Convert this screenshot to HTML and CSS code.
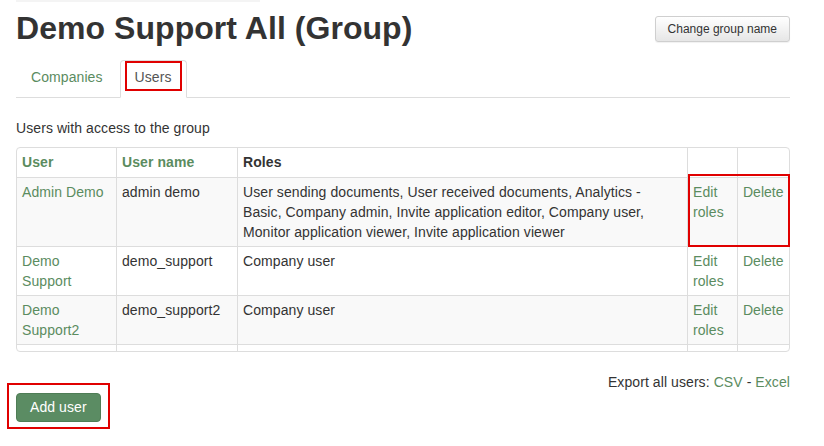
FILE: index.html
```html
<!DOCTYPE html>
<html>
<head>
<meta charset="utf-8">
<link rel="stylesheet" href="styles.css">
</head>
<body>
<div class="page">
  <div class="strip"></div>
  <div class="header">
    <h1 class="title">Demo Support All (Group)</h1>
    <button class="btn-default">Change group name</button>
  </div>
  <ul class="tabs">
    <li class="tab"><a class="tab-link"><span class="tab-label">Companies</span></a></li>
    <li class="tab active"><a class="tab-link"><span class="tab-label marked">Users</span></a></li>
  </ul>
  <p class="intro">Users with access to the group</p>
  <div class="table-area">
    <div class="table-wrap">
      <table class="users">
        <thead>
          <tr>
            <th class="c1"><a class="link">User</a></th>
            <th class="c2"><a class="link">User name</a></th>
            <th class="c3">Roles</th>
            <th class="c4"></th>
            <th class="c5"></th>
          </tr>
        </thead>
        <tbody>
          <tr class="odd">
            <td><a class="link">Admin Demo</a></td>
            <td>admin demo</td>
            <td class="roles">User sending documents, User received documents, Analytics - Basic, Company admin, Invite application editor, Company user, Monitor application viewer, Invite application viewer</td>
            <td><a class="link">Edit roles</a></td>
            <td class="nowrap"><a class="link">Delete</a></td>
          </tr>
          <tr>
            <td><a class="link">Demo Support</a></td>
            <td>demo_support</td>
            <td class="roles">Company user</td>
            <td><a class="link">Edit roles</a></td>
            <td class="nowrap"><a class="link">Delete</a></td>
          </tr>
          <tr class="odd">
            <td><a class="link">Demo Support2</a></td>
            <td>demo_support2</td>
            <td class="roles">Company user</td>
            <td><a class="link">Edit roles</a></td>
            <td class="nowrap"><a class="link">Delete</a></td>
          </tr>
          <tr>
            <td>&nbsp;</td>
            <td>&nbsp;</td>
            <td>&nbsp;</td>
            <td>&nbsp;</td>
            <td>&nbsp;</td>
          </tr>
        </tbody>
      </table>
    </div>
    <div class="row-mark"></div>
  </div>
  <div class="export">Export all users: <a class="link">CSV</a> - <a class="link">Excel</a></div>
  <div class="actions">
    <span class="marked-btn"><button class="btn-primary">Add user</button></span>
  </div>
</div>
</body>
</html>
```

FILE: styles.css
```css
* { box-sizing: border-box; }

html, body {
  margin: 0;
  padding: 0;
  background: #fff;
}

body {
  font-family: "Liberation Sans", Arial, sans-serif;
  font-size: 14px;
  line-height: 20px;
  color: #333;
  letter-spacing: 0.08px;
}

.page {
  padding: 0 34px 20px 16px;
}

.strip {
  width: 244px;
  height: 2px;
  background: #f4f4f4;
}

.header {
  display: flex;
  justify-content: space-between;
  align-items: flex-start;
  margin-top: 8px;
}

.title {
  margin: 0;
  font-size: 32px;
  line-height: 36px;
  font-weight: bold;
  color: #333;
  letter-spacing: 0.05px;
}

.btn-default {
  margin-top: 6px;
  font-family: "Liberation Sans", Arial, sans-serif;
  font-size: 12px;
  line-height: 18px;
  padding: 3px 12px;
  color: #333;
  background: linear-gradient(to bottom, #ffffff 0%, #e6e6e6 100%);
  border: 1px solid #cfcfcf;
  border-radius: 3px;
  box-shadow: 0 1px 1px rgba(0,0,0,0.06);
}

.tabs {
  list-style: none;
  margin: 14px 0 0;
  padding: 0;
  display: flex;
  border-bottom: 1px solid #ddd;
}

.tab {
  margin-right: 2px;
  margin-bottom: -1px;
}

.tab-link {
  display: block;
  padding: 0 4px 6px;
  border: 1px solid transparent;
  border-radius: 4px 4px 0 0;
  color: #5b8c5f;
}

.tab.active .tab-link {
  border-color: #ddd #ddd transparent;
  background: #fff;
  color: #555;
}

.tab-label {
  display: block;
  padding: 4px 8px 2px;
  border: 2px solid transparent;
}

.tab-label.marked {
  border-color: #e00000;
}

.intro {
  margin: 20px 0 0;
}

.table-area {
  position: relative;
  margin-top: 9px;
}

.table-wrap {
  height: 205px;
  border: 1px solid #ddd;
  border-radius: 4px;
  overflow: hidden;
}

.users {
  width: 772px;
  table-layout: fixed;
  border-collapse: separate;
  border-spacing: 0;
}

.users th,
.users td {
  text-align: left;
  vertical-align: top;
  padding: 4px 5px;
  border-left: 1px solid #ddd;
  border-top: 1px solid #ddd;
}

.users th {
  border-top: none;
  padding: 4px 5px 5px;
  font-weight: bold;
}

.users th:first-child,
.users td:first-child {
  border-left: none;
}

.users td.roles {
  padding-right: 16px;
}

.users .c1 { width: 99px; }
.users .c2 { width: 121px; }
.users .c3 { width: 450px; }
.users .c4 { width: 50px; }
.users .c5 { width: 52px; }

.users tr.odd td {
  background: #f9f9f9;
}

.nowrap { white-space: nowrap; letter-spacing: 0; }

.link {
  color: #5b8c5f;
  text-decoration: none;
}

.row-mark {
  position: absolute;
  left: 672px;
  top: 27px;
  width: 102px;
  height: 73px;
  border: 2px solid #e00000;
}

.export {
  margin-top: 20px;
  text-align: right;
}

.actions {
  margin-top: 1px;
  display: flex;
}

.marked-btn {
  position: relative;
  display: inline-block;
}

.marked-btn::after {
  content: "";
  position: absolute;
  top: -10px;
  left: -9px;
  right: -9px;
  bottom: -7px;
  border: 2px solid #e00000;
}

.btn-primary {
  display: block;
  font-family: "Liberation Sans", Arial, sans-serif;
  font-size: 14px;
  line-height: 20px;
  padding: 3px 13px 4px;
  color: #fff;
  background: #5b8c63;
  border: 1px solid #4f7d56;
  border-radius: 4px;
  letter-spacing: 0.08px;
}
```
